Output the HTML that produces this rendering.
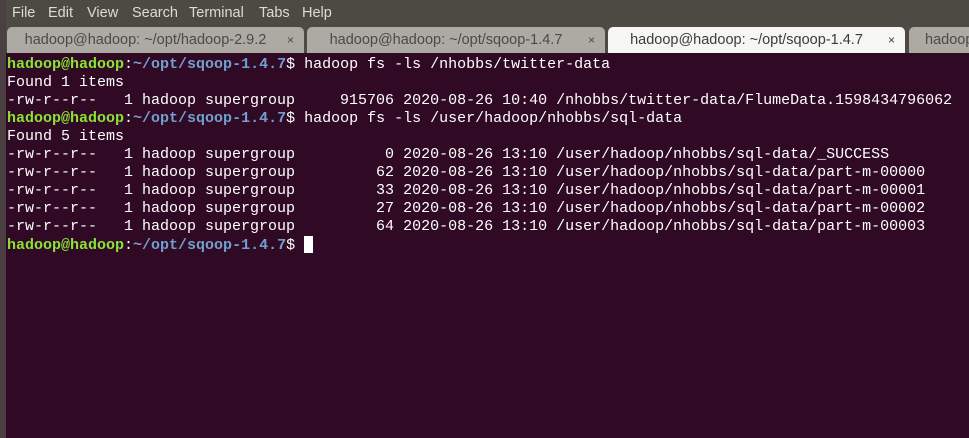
<!DOCTYPE html>
<html><head><style>
body{margin:0;width:969px;height:438px;overflow:hidden;background:#300a24;font-family:"Liberation Sans",sans-serif;position:relative}
.left{position:absolute;left:0;top:0;width:6px;height:438px;background:#4b3f44}
.menu{position:absolute;left:0;top:0;width:969px;height:27px;background:#4d4a44;color:#dfdbd2;font-size:14.5px}
.menu span{position:absolute;top:5px}
.tabbar{position:absolute;left:0;top:27px;width:969px;height:26px;background:#4d4a44}
.tab{position:absolute;top:0;height:26px;background:#adaaa3;border-radius:5px 5px 0 0;color:#4a4a48;font-size:14.5px;line-height:27px;text-align:center;overflow:hidden;white-space:nowrap}
.tab.act{background:#f6f6f4;color:#3c3c3c}
.tab .x{position:absolute;right:10px;top:0;font-size:12px}
.term{position:absolute;left:7px;top:56px;font-family:"Liberation Mono",monospace;font-size:15px;line-height:18px;color:#fff;white-space:pre;margin:0}
.g{color:#8ae234;font-weight:bold}.b{color:#729fcf;font-weight:bold}
.cur{display:inline-block;width:9px;height:17px;background:#fff;vertical-align:-4px}
</style></head><body>
<div class="menu"><span style="left:12px">File</span><span style="left:48px">Edit</span><span style="left:87px">View</span><span style="left:132px">Search</span><span style="left:189px">Terminal</span><span style="left:259px">Tabs</span><span style="left:302px">Help</span></div>
<div class="tabbar">
<div class="tab" style="left:7px;width:297px"><span style="margin-right:20px">hadoop@hadoop: ~/opt/hadoop-2.9.2</span><span class="x">×</span></div>
<div class="tab" style="left:307px;width:298px"><span style="margin-right:20px">hadoop@hadoop: ~/opt/sqoop-1.4.7</span><span class="x">×</span></div>
<div class="tab act" style="left:608px;width:297px"><span style="margin-right:20px">hadoop@hadoop: ~/opt/sqoop-1.4.7</span><span class="x">×</span></div>
<div class="tab" style="left:909px;width:80px;text-align:left;padding-left:16px">hadoop@hadoop</div>
</div>
<div class="left"></div>
<pre class="term"><span class="g">hadoop@hadoop</span>:<span class="b">~/opt/sqoop-1.4.7</span>$ hadoop fs -ls /nhobbs/twitter-data
Found 1 items
-rw-r--r--   1 hadoop supergroup     915706 2020-08-26 10:40 /nhobbs/twitter-data/FlumeData.1598434796062
<span class="g">hadoop@hadoop</span>:<span class="b">~/opt/sqoop-1.4.7</span>$ hadoop fs -ls /user/hadoop/nhobbs/sql-data
Found 5 items
-rw-r--r--   1 hadoop supergroup          0 2020-08-26 13:10 /user/hadoop/nhobbs/sql-data/_SUCCESS
-rw-r--r--   1 hadoop supergroup         62 2020-08-26 13:10 /user/hadoop/nhobbs/sql-data/part-m-00000
-rw-r--r--   1 hadoop supergroup         33 2020-08-26 13:10 /user/hadoop/nhobbs/sql-data/part-m-00001
-rw-r--r--   1 hadoop supergroup         27 2020-08-26 13:10 /user/hadoop/nhobbs/sql-data/part-m-00002
-rw-r--r--   1 hadoop supergroup         64 2020-08-26 13:10 /user/hadoop/nhobbs/sql-data/part-m-00003
<span class="g">hadoop@hadoop</span>:<span class="b">~/opt/sqoop-1.4.7</span>$ <span class="cur"></span></pre>
</body></html>
